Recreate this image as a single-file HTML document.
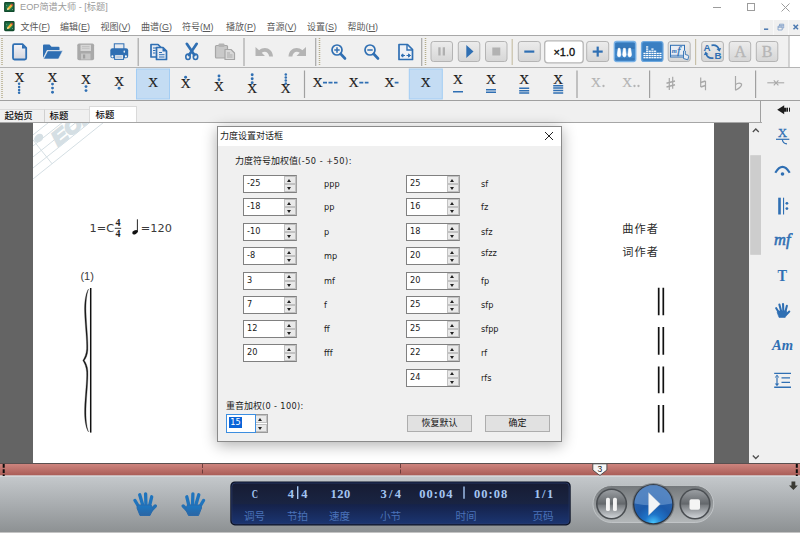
<!DOCTYPE html>
<html lang="zh">
<head>
<meta charset="utf-8">
<title>EOP简谱大师 - [标题]</title>
<style>
*{box-sizing:border-box;margin:0;padding:0}
html,body{width:800px;height:533px;overflow:hidden;background:#fff}
body{position:relative;font-family:"Liberation Sans","Noto Sans CJK SC",sans-serif;font-size:11px;color:#222}
.abs{position:absolute}
.t{position:absolute;white-space:nowrap;line-height:1}
#titlebar{left:0;top:0;width:800px;height:19px;background:#fff}
#menubar{left:0;top:19px;width:800px;height:16px;background:#fff}
.mi{position:absolute;top:22px;font-size:9px;line-height:11px;color:#585858;white-space:nowrap}
.mi u{text-decoration:underline;text-underline-offset:1px}
#tb1{left:0;top:35px;width:800px;height:33px;background:#f0f0f0;border-top:1px solid #a8a8a8;border-bottom:1px solid #b4b4b4}
#tb2{left:0;top:68px;width:800px;height:33px;background:#f0f0f0;border-bottom:1px solid #a0a0a0}
#tabbar{left:0;top:101px;width:800px;height:21px;background:#f0f0f0}
#main{left:0;top:122px;width:762px;height:341px;background:#646464}
#page{left:33px;top:122px;width:681px;height:341px;background:#fff;overflow:hidden}
#vscroll{left:749px;top:122px;width:13px;height:341px;background:#f0f0f0}
#rtool{left:762px;top:101px;width:38px;height:362px;background:#f0f0f0}
#timeline{left:0;top:463px;width:800px;height:12px;background:#c47872}
#bottom{left:0;top:475px;width:800px;height:58px;background:linear-gradient(#c9ccd0,#b4b8bc 50%,#a3a7ab)}
#dlg{left:217px;top:126px;width:345px;height:316px;background:#f0f0f0;border:1px solid #8a8a8a;box-shadow:0 3px 14px rgba(0,0,0,.32)}

#dlgtitle{left:218px;top:127px;width:343px;height:19px;background:#fff}
.spin{position:absolute;width:53.600px;height:18px;background:#fff;border:1px solid #808080;border-right-color:#a0a0a0}
.spin .v{position:absolute;left:3px;top:3px;font:8.2px/1 "DejaVu Sans","Liberation Sans",sans-serif;color:#1a1a1a;white-space:nowrap}
.spin i{position:absolute;right:0;width:12px;height:8px;background:#e9e9e9;border:1px solid #c2c2c2}
.spin i.up{top:0}
.spin i.dn{bottom:0}
.spin i::after{content:"";position:absolute;left:2.200px;top:1.500px;border-left:2.800px solid transparent;border-right:2.800px solid transparent}
.spin i.up::after{border-bottom:3px solid #222}
.spin i.dn::after{border-top:3px solid #222;top:2px}
.dl{font:8.2px/1 "DejaVu Sans","Liberation Sans",sans-serif;color:#1a1a1a}
.cj{font:9px/1 "Liberation Sans","Noto Sans CJK SC",sans-serif;color:#1a1a1a}
.btn{position:absolute;height:17px;width:65px;background:#e1e1e1;border:1px solid #adadad;text-align:center;font:9px/15px "Liberation Sans","Noto Sans CJK SC",sans-serif;color:#111}

.appico{position:absolute;width:10.700px;height:10.500px}
.tab{position:absolute;font:500 9.400px/1 "Liberation Sans","Noto Sans CJK SC",sans-serif;color:#111;white-space:nowrap}
</style>
</head>
<body>
<div id="titlebar" class="abs"></div>
<div id="menubar" class="abs"></div>
<svg class="appico" style="left:4.400px;top:1.500px" viewBox="0 0 22 22"><rect x="0" y="0" width="22" height="21.500" rx="3" fill="#0e4529"/><rect x="1.800" y="1.800" width="18.400" height="17.500" rx="2.500" fill="#196039"/><ellipse cx="11" cy="10.500" rx="7" ry="6" fill="#2a8552" opacity="0.700"/><path d="M5.800 17l1.900-5.200 6.500-7 3.700 3.400-6.500 7z" fill="#f2b233"/><path d="M14.200 4.800l3.700 3.400 1.600-1.700-3.700-3.400z" fill="#d8433f"/><path d="M5.800 17l1.900-5.200 3.500 3.300z" fill="#f7e2ae"/><circle cx="5" cy="6.500" r="0.900" fill="#d8efe0"/><circle cx="17.500" cy="15.500" r="0.900" fill="#d8efe0"/></svg>
<div class="t" style="left:20px;top:3px;font-size:9.2px;color:#9a9a9a">EOP简谱大师 - [标题]</div>
<svg class="abs" style="left:706px;top:0" width="94" height="19" viewBox="0 0 94 19"><g stroke="#9c9c9c" stroke-width="1" fill="none"><path d="M7 7.500H15"/><rect x="41.500" y="3.500" width="7" height="7"/><path d="M75.500 3.500l8 8M83.500 3.500l-8 8"/></g></svg>
<svg class="appico" style="left:4px;top:21.200px" viewBox="0 0 22 22"><rect x="0" y="0" width="22" height="21.500" rx="3" fill="#0e4529"/><rect x="1.800" y="1.800" width="18.400" height="17.500" rx="2.500" fill="#196039"/><ellipse cx="11" cy="10.500" rx="7" ry="6" fill="#2a8552" opacity="0.700"/><path d="M5.800 17l1.900-5.200 6.500-7 3.700 3.400-6.500 7z" fill="#f2b233"/><path d="M14.200 4.800l3.700 3.400 1.600-1.700-3.700-3.400z" fill="#d8433f"/><path d="M5.800 17l1.900-5.200 3.500 3.300z" fill="#f7e2ae"/><circle cx="5" cy="6.500" r="0.900" fill="#d8efe0"/><circle cx="17.500" cy="15.500" r="0.900" fill="#d8efe0"/></svg><div class="mi" style="left:20.5px">文件(<u>F</u>)</div><div class="mi" style="left:60px">编辑(<u>E</u>)</div><div class="mi" style="left:100.5px">视图(<u>V</u>)</div><div class="mi" style="left:141px">曲谱(<u>G</u>)</div><div class="mi" style="left:182px">符号(<u>M</u>)</div><div class="mi" style="left:226px">播放(<u>P</u>)</div><div class="mi" style="left:266.5px">音源(<u>V</u>)</div><div class="mi" style="left:307px">设置(<u>S</u>)</div><div class="mi" style="left:347.5px">帮助(<u>H</u>)</div>
<div class="abs" style="left:760px;top:20px;width:40px;height:15px;background:#f0f0f0"></div><div class="abs" style="left:773px;top:20px;width:1px;height:15px;background:#f8f8f8"></div><div class="abs" style="left:787.500px;top:20px;width:1px;height:15px;background:#f8f8f8"></div>
<svg class="abs" style="left:760px;top:20px" width="40" height="15" viewBox="0 0 40 15"><g stroke="#4a78b0" stroke-width="1.200" fill="none"><path d="M4 9.200H8.200" stroke-width="1.500"/><path d="M18 6.200h4.200v3.800h-4.200zM19.500 6v-1.800h4.200v3.800h-1.300M18 7.300h4.200M19.500 5.300h4.200" stroke-width="0.800" stroke="#7c9cc6"/><path d="M33.500 4.700l4.500 4.500M38 4.700l-4.500 4.500" stroke-width="1.500"/></g></svg>

<div id="tb1" class="abs"></div>
<div id="tb2" class="abs"></div>
<svg class="abs" style="left:0;top:36px" width="800" height="31" viewBox="0 36 800 31">
<defs>
<linearGradient id="gbtn" x1="0" y1="0" x2="0" y2="1"><stop offset="0" stop-color="#ececec"/><stop offset="1" stop-color="#d6d6d6"/></linearGradient>
<linearGradient id="gdoc" x1="0" y1="0" x2="0" y2="1"><stop offset="0" stop-color="#f4f4f8"/><stop offset="1" stop-color="#d4d6de"/></linearGradient>
</defs>
<rect x="789.500" y="36" width="11" height="31" fill="#fff"/>
<path d="M789 36V67" stroke="#b0b0b0" stroke-width="1"/>
<!-- grips -->
<g stroke="#b5ad8c" stroke-width="1.500" stroke-dasharray="1 1"><path d="M2 38V66"/><path d="M319.500 38V66"/><path d="M425.500 38V66"/></g>
<!-- separators -->
<g stroke="#a8a8a8" stroke-width="1.200"><path d="M138.200 38V66"/><path d="M244 38V66"/><path d="M315.700 38V66"/><path d="M421.700 38V66"/></g>
<g stroke="#c8c0a8" stroke-width="1.200"><path d="M512.200 39V65"/><path d="M695.600 39V65"/></g>
<!-- new -->
<path d="M14.500 44.200h8l3.700 3.700V58q0 1.500-1.500 1.500H14.500q-1.500 0-1.500-1.500V45.700q0-1.500 1.500-1.500z" fill="url(#gdoc)" stroke="#2f6fb3" stroke-width="1.800" stroke-linejoin="round"/>
<path d="M22 44.500v4h4z" fill="#2f6fb3"/>
<!-- open -->
<path d="M43 58V45.500q0-1 1-1h5.500l2 2.200h7q1 0 1 1V50H47z" fill="#2f6fb3"/>
<path d="M43.500 59l4.200-8.200h15l-4.200 8.200z" fill="#2f6fb3" stroke="#f0f0f0" stroke-width="0.600"/>
<!-- save (disabled) -->
<rect x="77.300" y="43.500" width="16.800" height="16.800" rx="1.800" fill="#a9a9a9"/>
<rect x="80.500" y="44.800" width="10.500" height="6.200" fill="#d6d6d6"/><path d="M82 46.500h7.500M82 48.300h7.500" stroke="#bdbdbd" stroke-width="0.800"/>
<rect x="81" y="53.500" width="9.500" height="6" fill="#c6c6c6"/>
<rect x="83" y="54.500" width="2.200" height="4" fill="#a0a0a0"/>
<!-- print -->
<rect x="114.300" y="43.800" width="9.600" height="6" fill="#e6eaf0" stroke="#2f6fb3" stroke-width="1"/>
<rect x="110.300" y="48.300" width="17.900" height="10" rx="2.200" fill="#2f6fb3"/>
<rect x="114.600" y="54.600" width="9" height="4.800" fill="#e4e8ee" stroke="#2f6fb3" stroke-width="1"/><path d="M116.300 57h5.600" stroke="#9fb4cf" stroke-width="1"/>
<circle cx="112.400" cy="56.400" r="1.050" fill="#fff"/><circle cx="125.900" cy="56.400" r="1.050" fill="#fff"/><ellipse cx="124.300" cy="51.700" rx="0.800" ry="1.100" fill="#e8eef6"/>
<!-- copy -->
<path d="M151 44.500h7l3 3V57H151z" fill="#e6ebf3" stroke="#2f6fb3" stroke-width="1.700" stroke-linejoin="round"/>
<path d="M156.500 47.500h6.500l3.500 3.500V59.500H156.500z" fill="#e6ebf3" stroke="#2f6fb3" stroke-width="1.700" stroke-linejoin="round"/>
<path d="M162.500 47.500v4h4z" fill="#2f6fb3"/>
<path d="M153 48h3M153 50.500h2.500M153 53h2.500M159 52.500h3M159 54.700h5.500M159 57h5.500" stroke="#2f6fb3" stroke-width="1"/>
<!-- cut -->
<g fill="none" stroke="#2f6fb3">
<path d="M186.800 43.800l7.600 11.300M196.700 43.800l-7.600 11.300" stroke-width="2.700" stroke-linecap="round"/>
<ellipse cx="188" cy="56.800" rx="2.200" ry="2.700" stroke-width="1.600"/><ellipse cx="195.500" cy="56.800" rx="2.200" ry="2.700" stroke-width="1.600"/>
</g>
<!-- paste disabled -->
<rect x="215.500" y="45.500" width="12" height="12.500" rx="1" fill="#c9c9c9" stroke="#a6a6a6" stroke-width="1.200"/>
<rect x="218.500" y="43.500" width="6" height="3.500" rx="1" fill="#b4b4b4"/>
<path d="M225 49.500h6l3.500 3.500v6.500H225z" fill="#d9d9d9" stroke="#a6a6a6" stroke-width="1.200" stroke-linejoin="round"/>
<path d="M227 53h3M227 55h5.500M227 57h5.500" stroke="#a6a6a6" stroke-width="0.900"/>
<!-- undo / redo disabled -->
<path d="M255.500 47v9h9.500l-3.300-3.200c2.800-2.300 6.800-1.300 7.500 3.800h3.800c-.6-8.500-8.800-10.700-13.900-6.300z" fill="#b4b4b4"/>
<path d="M306 47v9h-9.500l3.300-3.200c-2.800-2.300-6.800-1.300-7.500 3.800h-3.800c.6-8.500 8.800-10.700 13.900-6.300z" fill="#b4b4b4"/>
<!-- zoom in/out -->
<g fill="none" stroke="#2f6fb3">
<circle cx="337" cy="50" r="5" stroke-width="1.700"/><path d="M340.800 54l4.200 4.500" stroke-width="2.600" stroke-linecap="round"/><path d="M334.300 50h5.400M337 47.300v5.400" stroke-width="1.500"/>
<circle cx="370" cy="50" r="5" stroke-width="1.700"/><path d="M373.800 54l4.200 4.500" stroke-width="2.600" stroke-linecap="round"/><path d="M367.300 50h5.400" stroke-width="1.500"/>
</g>
<!-- fit -->
<path d="M399 44.500h8.500l5 5V59.500H399z" fill="#eef1f6" stroke="#2f6fb3" stroke-width="1.700" stroke-linejoin="round"/>
<path d="M407 44.500v5.500h5.500" fill="none" stroke="#2f6fb3" stroke-width="1.400"/>
<path d="M401 55.500h9.500M401 55.500l2-1.600v3.200zM410.500 55.500l-2-1.600v3.200z" stroke="#2f6fb3" stroke-width="1" fill="#2f6fb3" stroke-dasharray="none"/>
<rect x="405" y="54" width="1.500" height="3" fill="#eef1f6"/>
<!-- transport buttons -->
<g fill="url(#gbtn)" stroke="#b4b4b4" stroke-width="1">
<rect x="431" y="41.500" width="21.500" height="20" rx="2.500"/>
<rect x="458.300" y="41.500" width="21.500" height="20" rx="2.500"/>
<rect x="485.500" y="41.500" width="21.500" height="20" rx="2.500"/>
<rect x="518.300" y="41.500" width="22" height="20" rx="2.500"/>
<rect x="586.700" y="41.500" width="22" height="20" rx="2.500"/>
<rect x="668.200" y="41.500" width="22" height="20" rx="2.500"/>
<rect x="701.700" y="41.500" width="21.700" height="20" rx="2.500"/>
<rect x="729.200" y="41.500" width="21.500" height="20" rx="2.500"/>
<rect x="756.300" y="41.500" width="21.500" height="20" rx="2.500"/>
</g>
<rect x="438.300" y="47.300" width="2.300" height="8.200" fill="#b0b0b0"/><rect x="442.700" y="47.300" width="2.300" height="8.200" fill="#b0b0b0"/>
<path d="M466.300 45l7.200 6.500-7.200 6.500z" fill="#2f6fb3"/>
<rect x="492.300" y="47.500" width="8" height="8" fill="#b2b2b2"/>
<rect x="524.300" y="50.500" width="10" height="2.200" fill="#2f6fb3"/>
<rect x="592.700" y="50.500" width="10" height="2.200" fill="#2f6fb3"/><rect x="596.600" y="46.600" width="2.200" height="10" fill="#2f6fb3"/>
<!-- speed box -->
<rect x="544.700" y="40.800" width="38.500" height="22" rx="3" fill="#fff" stroke="#b6b6b6" stroke-width="1.300"/>
<text x="564.300" y="56.300" text-anchor="middle" font-family="Liberation Sans, sans-serif" font-size="11" fill="#111" stroke="#111" stroke-width="0.350">×1.0</text>
<!-- piano -->
<rect x="614.300" y="41.500" width="21.500" height="20" rx="2.500" fill="#3f86c9" stroke="#7ab2e6" stroke-width="1.300"/>
<rect x="615.500" y="43" width="19" height="5" fill="#3679bb"/>
<path d="M615.500 48.200h19" stroke="#2a66a6" stroke-width="0.800"/>
<rect x="615.500" y="58" width="19" height="2.500" fill="#3679bb"/>
<g fill="#fff" stroke="#fff" stroke-width="0.600"><path d="M618.2 48.300h1.800l0.900 6.300q0 2.300-1.800 2.300t-1.800-2.300z"/><path d="M623.5 48.300h1.800l0.900 6.300q0 2.300-1.800 2.300t-1.800-2.300z"/><path d="M628.8000000000001 48.300h1.800l0.900 6.300q0 2.300-1.800 2.300t-1.800-2.300z"/></g>
<!-- eq -->
<rect x="641.500" y="41.500" width="21.500" height="20" rx="2.500" fill="#3f86c9" stroke="#6fa8de" stroke-width="1.200"/>
<rect x="643" y="43" width="18.500" height="17" fill="#3a7fc2"/>
<g fill="#fff"><rect x="643.40" y="57.05" width="2.200" height="1.300"/><rect x="643.40" y="54.90" width="2.200" height="1.300"/><rect x="643.40" y="52.75" width="2.200" height="1.300"/><rect x="646.05" y="57.05" width="2.200" height="1.300"/><rect x="646.05" y="54.90" width="2.200" height="1.300"/><rect x="646.05" y="52.75" width="2.200" height="1.300"/><rect x="646.05" y="50.60" width="2.200" height="1.300"/><rect x="646.05" y="48.45" width="2.200" height="1.300"/><rect x="646.05" y="46.30" width="2.200" height="1.300"/><rect x="648.70" y="57.05" width="2.200" height="1.300"/><rect x="648.70" y="54.90" width="2.200" height="1.300"/><rect x="648.70" y="52.75" width="2.200" height="1.300"/><rect x="648.70" y="50.60" width="2.200" height="1.300"/><rect x="651.35" y="57.05" width="2.200" height="1.300"/><rect x="651.35" y="54.90" width="2.200" height="1.300"/><rect x="651.35" y="52.75" width="2.200" height="1.300"/><rect x="651.35" y="50.60" width="2.200" height="1.300"/><rect x="651.35" y="48.45" width="2.200" height="1.300"/><rect x="654.00" y="57.05" width="2.200" height="1.300"/><rect x="654.00" y="54.90" width="2.200" height="1.300"/><rect x="654.00" y="52.75" width="2.200" height="1.300"/><rect x="654.00" y="50.60" width="2.200" height="1.300"/><rect x="656.65" y="57.05" width="2.200" height="1.300"/><rect x="656.65" y="54.90" width="2.200" height="1.300"/><rect x="656.65" y="52.75" width="2.200" height="1.300"/><rect x="659.30" y="57.05" width="2.200" height="1.300"/><rect x="659.30" y="54.90" width="2.200" height="1.300"/><rect x="659.30" y="52.75" width="2.200" height="1.300"/></g>
<!-- mf -->
<rect x="670.500" y="45.300" width="14" height="11.700" fill="#e8edf5" stroke="#2f6fb3" stroke-width="1"/>
<path d="M671 55.300h13" stroke="#2f6fb3" stroke-width="0.700"/>
<text x="671.800" y="53.300" font-family="Liberation Serif, serif" font-style="italic" font-weight="bold" font-size="6.500" fill="#2f6fb3">m</text><text x="677.300" y="54.300" font-family="Liberation Serif, serif" font-style="italic" font-size="11" fill="#2f6fb3" stroke="#2f6fb3" stroke-width="0.300">f</text>
<path d="M683.500 58.500v-7.500q.9-1.300 1.800 0v3.500l2.800.8q.8.400.5 1.500l-.8 3z" fill="#e8edf5" stroke="#2f6fb3" stroke-width="0.900"/>
<!-- AB -->
<g font-family="Liberation Sans, sans-serif" font-weight="bold" font-size="9.800" fill="#2f6fb3"><text x="703.600" y="50.600">A</text><text x="714.500" y="59.200">B</text></g>
<g fill="none" stroke="#2f6fb3" stroke-width="1.700"><path d="M711.500 45.300q5.800-1 7.500 4.200"/><path d="M713.500 58q-5.800 1-7.500-4.200"/></g>
<path d="M716.500 49l3 2.800 1.700-3.800z" fill="#2f6fb3"/><path d="M708.500 54.300l-3-2.800-1.700 3.800z" fill="#2f6fb3"/>
<!-- A B disabled -->
<g font-family="Liberation Serif, serif" font-size="16" fill="#b6b6b6" stroke="#b6b6b6" stroke-width="0.350" text-anchor="middle"><text x="740.300" y="57">A</text><text x="767.200" y="57">B</text></g>
</svg>
<svg class="abs" style="left:0;top:68px" width="800" height="32" viewBox="0 68 800 32">
<path d="M2 71V98" stroke="#b5ad8c" stroke-width="1.500" stroke-dasharray="1 1"/>
<rect x="136.500" y="69" width="33" height="30" fill="#c4dcf3" stroke="#a3cdf4" stroke-width="1"/>
<rect x="409.300" y="69" width="33" height="30" fill="#c4dcf3" stroke="#a3cdf4" stroke-width="1"/>
<path d="M304.5 70.500V98" stroke="#a0a0a0" stroke-width="1.200"/>
<path d="M577 70.500V98" stroke="#a0a0a0" stroke-width="1.200"/>
<path d="M649.6 70.500V98" stroke="#a0a0a0" stroke-width="1.200"/>
<path d="M755.6 70.500V98" stroke="#a0a0a0" stroke-width="1.200"/>
<g font-family="Liberation Serif, serif" font-size="13.600" stroke="#1c1c1c" stroke-width="0.200" text-rendering="geometricPrecision">
<text x="19.3" y="82" text-anchor="middle" fill="#1c1c1c">X</text>
<text x="52.5" y="82" text-anchor="middle" fill="#1c1c1c">X</text>
<text x="85.8" y="84.4" text-anchor="middle" fill="#1c1c1c">X</text>
<text x="119.2" y="85.9" text-anchor="middle" fill="#1c1c1c">X</text>
<text x="153.2" y="87.4" text-anchor="middle" fill="#1c1c1c">X</text>
<text x="185.7" y="88.4" text-anchor="middle" fill="#1c1c1c">X</text>
<text x="219" y="91" text-anchor="middle" fill="#1c1c1c">X</text>
<text x="252.2" y="93.2" text-anchor="middle" fill="#1c1c1c">X</text>
<text x="285.6" y="93.2" text-anchor="middle" fill="#1c1c1c">X</text>
<text x="317.7" y="87.2" text-anchor="middle" fill="#1c1c1c">X</text>
<text x="353.7" y="87.2" text-anchor="middle" fill="#1c1c1c">X</text>
<text x="389.5" y="87.2" text-anchor="middle" fill="#1c1c1c">X</text>
<text x="425.6" y="87.3" text-anchor="middle" fill="#1c1c1c">X</text>
<text x="458" y="83.5" text-anchor="middle" fill="#1c1c1c">X</text>
<text x="491" y="83.5" text-anchor="middle" fill="#1c1c1c">X</text>
<text x="524.2" y="83.5" text-anchor="middle" fill="#1c1c1c">X</text>
<text x="558.2" y="83.5" text-anchor="middle" fill="#1c1c1c">X</text>
<text x="595.8" y="87" text-anchor="middle" fill="#b4b4b4" stroke="#b4b4b4">X</text>
<text x="627.2" y="87" text-anchor="middle" fill="#b4b4b4" stroke="#b4b4b4">X</text>
</g>
<g fill="#2f6fb3"><circle cx="19.1" cy="83.7" r="1.25"/><circle cx="19.1" cy="86.9" r="1.25"/><circle cx="19.1" cy="90" r="1.25"/><circle cx="19.1" cy="92.8" r="1.25"/><circle cx="52.5" cy="84.1" r="1.45"/><circle cx="52.5" cy="88.1" r="1.45"/><circle cx="52.5" cy="92.2" r="1.45"/><circle cx="86" cy="86.6" r="1.45"/><circle cx="86" cy="90.6" r="1.45"/><circle cx="119.1" cy="88.2" r="1.45"/><circle cx="185.6" cy="77.2" r="1.45"/><circle cx="219" cy="76" r="1.45"/><circle cx="219" cy="79.8" r="1.45"/><circle cx="252.2" cy="74.8" r="1.45"/><circle cx="252.2" cy="78.7" r="1.45"/><circle cx="252.2" cy="82.7" r="1.45"/><circle cx="285.8" cy="74.5" r="1.25"/><circle cx="285.8" cy="77.5" r="1.25"/><circle cx="285.8" cy="80.5" r="1.25"/><circle cx="285.8" cy="83.5" r="1.25"/></g>
<path d="M323 82.700H327 M328.5 82.700H332.5 M334 82.700H337.5 M359.3 82.700H363.3 M364.8 82.700H368.5 M394.7 82.700H398.5" stroke="#2f6fb3" stroke-width="1.800"/>
<path d="M453 91.700H463 M486 89.8H496 M486 92.2H496 M519.200 88.3H529.200 M519.200 90.7H529.200 M519.200 93H529.200 M553.200 85.7H563.200 M553.200 88.1H563.200 M553.200 90.5H563.200 M553.200 92.9H563.200" stroke="#2f6fb3" stroke-width="1.500"/>
<g fill="#b4b4b4"><circle cx="603.500" cy="86" r="1.150"/><circle cx="634.500" cy="86" r="1.150"/><circle cx="638.500" cy="86" r="1.150"/></g>
<g stroke="#a8a8a8" fill="none" stroke-width="1.200"><path d="M669.300 78V90M672.700 76.700V88.700"/><path d="M666.500 83.200l8.500-2.200M666.500 87l8.500-2.200" stroke-width="1.500"/><path d="M700.700 77.500V87M705.500 81V90.300"/><path d="M700.700 82.500l4.800-1.500M700.700 87l4.800-1.500" stroke-width="1.500"/><path d="M735.500 76V90.300"/><path d="M735.500 84.500q3.500-2.500 6-.5q1 2.500-6 6.300" stroke-width="1.300"/><path d="M767.300 82.800H784.200" stroke-width="1.100"/><path d="M773.800 80.300l4.600 5M778.400 80.300l-4.600 5" stroke-width="1.100"/></g>
</svg>

<div id="tabbar" class="abs"></div>
<div class="abs" style="left:0;top:101px;width:761px;height:21.500px;border-right:1px solid #a0a0a0;border-bottom:1px solid #a0a0a0"></div>
<div class="abs" style="left:0;top:108.500px;width:45px;height:14px;border-right:1px solid #d0d0d0;border-top:1px solid #dcdcdc"></div>
<div class="abs" style="left:45px;top:108.500px;width:45px;height:14px;border-top:1px solid #dcdcdc"></div>
<div class="abs" style="left:89.200px;top:105.500px;width:48px;height:17px;background:#fff;border:1px solid #dadada;border-bottom:none"></div>
<div class="tab" style="left:4.500px;top:111.300px">起始页</div>
<div class="tab" style="left:49.500px;top:111.300px">标题</div>
<div class="tab" style="left:95.500px;top:109.600px">标题</div>
<div id="main" class="abs"></div>
<div id="page" class="abs"></div>

<svg class="abs" style="left:33px;top:122px" width="681" height="341" viewBox="33 122 681 341">
<!-- watermark -->
<g transform="translate(33 179) rotate(-38.700)" fill="#d5dfe4" stroke="none">
<g stroke="#d3dde2" stroke-width="0.900" fill="none"><path d="M-5 0H120M-5 -8.600H120M-5 -17.200H120M-5 -25.800H120M-5 -34.400H120"/><path d="M24.400 0V-40"/></g>
<ellipse cx="30" cy="-28.300" rx="5" ry="3.800" />
<text transform="translate(39.800 -9.600) scale(1.140 1)" font-family="Liberation Sans, sans-serif" font-weight="bold" font-style="italic" font-size="20" stroke="#d5dfe4" stroke-width="1.700">EOP</text>
</g>
<!-- key / tempo -->
<g font-family="DejaVu Sans, Liberation Sans, sans-serif" fill="#3a3a3a">
<text x="89.600" y="231.700" font-size="11.300">1=C</text>
<text x="140.800" y="231.700" font-size="11.300">=120</text>
<text x="80.400" y="280" font-size="11" font-family="Liberation Sans, sans-serif">(1)</text>
</g>
<g font-family="Liberation Serif, serif" font-weight="bold" font-size="10" fill="#222" text-anchor="middle"><text x="118" y="226.400">4</text><text x="118" y="236.800">4</text></g>
<path d="M114.800 228.300H121.200" stroke="#222" stroke-width="0.900"/>
<ellipse cx="135" cy="232.300" rx="2.900" ry="1.900" transform="rotate(-25 135 232.300)" fill="#111"/>
<path d="M137.400 219.300V232" stroke="#111" stroke-width="0.900"/>
<!-- brace and bar -->
<path d="M90.700 288V432.600" stroke="#111" stroke-width="1.500"/>
<path d="M88.600 289C85.500 293 84.300 303 84.600 312C85 325 87 340 86.600 349C86.300 354 84.500 358 82.800 360.500C84.500 363 86.300 367 86.600 372C87 381 85 396 84.600 409C84.300 418 85.500 428 88.600 432C86.500 427 85.800 418 86 409C86.400 396 88.300 381 87.900 371C87.600 366 85.800 362.500 84.300 360.500C85.800 358.500 87.600 355 87.900 350C88.300 340 86.400 325 86 312C85.800 303 86.500 294 88.600 289Z" fill="#1a1a1a" stroke="#1a1a1a" stroke-width="0.300"/>
<!-- authors -->
<g font-family="Liberation Sans, Noto Sans CJK SC, sans-serif" font-size="11.200" fill="#2a2a2a" letter-spacing="1"><text x="622.300" y="233">曲作者</text><text x="622.300" y="255.600">词作者</text></g>
<!-- double bars -->
<path d="M658.700 287.700V315.300M663.300 287.700V315.300M658.700 327.100V354.700M663.300 327.100V354.700M658.700 366.500V393.200M663.300 366.500V393.200M658.700 405V432.400M663.300 405V432.400" stroke="#111" stroke-width="1.700"/>
</svg>

<div id="vscroll" class="abs"></div>
<div id="rtool" class="abs"></div>
<div class="abs" style="left:0;top:121.500px;width:761.500px;height:1px;background:#a6a6a6"></div>
<svg class="abs" style="left:749px;top:101px" width="51" height="362" viewBox="749 101 51 362">
<!-- scrollbar -->
<rect x="750.200" y="155.200" width="10.800" height="99.600" fill="#cdcdcd"/>
<path d="M752.800 132l3-3 3 3M752.800 455.500l3 3 3-3" fill="none" stroke="#505050" stroke-width="1.300"/>
<!-- back arrow -->
<path d="M777.200 109.700l7-4.500v2.500h2.500v4h-2.500v2.500z" fill="#1e1e1e"/>
<path d="M787.500 107.700v4M789.500 107.700v4" stroke="#1e1e1e" stroke-width="1"/>
<g fill="#2f6fb3" stroke="none">
<text x="782.600" y="136.700" text-anchor="middle" font-family="Liberation Serif, serif" font-size="12.500" stroke="#2f6fb3" stroke-width="0.300">X</text>
<path d="M776 138.700H789.300V139.900H776z"/>
<circle cx="782.500" cy="174" r="1.800"/>
<rect x="778.200" y="197.700" width="2.600" height="16.800"/>
<rect x="783" y="197.700" width="1.100" height="16.800"/>
<circle cx="786.900" cy="203.300" r="1.400"/><circle cx="786.900" cy="208.600" r="1.400"/>
<text x="782.300" y="245.300" text-anchor="middle" font-family="Liberation Serif, serif" font-style="italic" font-size="16.500" stroke="#2f6fb3" stroke-width="0.550">mf</text>
<text x="782.200" y="280.800" text-anchor="middle" font-family="Liberation Serif, serif" font-weight="bold" font-size="16.500" textLength="9.600" lengthAdjust="spacingAndGlyphs">T</text>
<text x="782.500" y="349.700" text-anchor="middle" font-family="Liberation Serif, serif" font-style="italic" font-weight="bold" font-size="14.600">Am</text>
<path d="M774.200 372.700H791V374H774.200zM774.200 386.600H791V387.900H774.200zM781.500 377.200H790V378.500H781.500zM781.500 381.700H790V383H781.500z"/>
<path d="M776.400 376.500V384.500H777.600V376.500zM777 374.600l2.200 2.800h-4.400zM777 386.200l2.200-2.800h-4.400z"/>
</g>
<g fill="none" stroke="#2f6fb3">
<path d="M782.300 139.500q.5 4 4.700 4.300" stroke-width="1.200"/>
<path d="M775.300 172.800q7.200-11.800 14.400 0" stroke-width="2.200"/>
</g>
<!-- hand -->
<g transform="translate(774.800 303) scale(0.610)">
<g stroke="#2f6fb3" stroke-width="3.400" stroke-linecap="round" fill="none"><path d="M2.300 8.500L7 16M7.500 2.500L10.500 14M13.500 1.600L14 14M19.800 4.700L17.500 14M23.700 14L18.500 19.300"/></g>
<path d="M4.500 13H18.500L20.500 17L17 23.700H7L4 16Z" fill="#2f6fb3" stroke="#2f6fb3" stroke-width="1" stroke-linejoin="round"/>
</g>
</svg>

<div id="timeline" class="abs"></div>
<div id="bottom" class="abs"></div>
<svg class="abs" style="left:0;top:463px" width="800" height="70" viewBox="0 463 800 70">
<defs>
<linearGradient id="gred" x1="0" y1="0" x2="0" y2="1"><stop offset="0" stop-color="#d18882"/><stop offset="1" stop-color="#a75a54"/></linearGradient>
<linearGradient id="ggray" x1="0" y1="0" x2="0" y2="1"><stop offset="0" stop-color="#c5c9cc"/><stop offset="0.500" stop-color="#a9adb0"/><stop offset="1" stop-color="#8c9092"/></linearGradient>
<linearGradient id="glcd" x1="0" y1="0" x2="0" y2="1"><stop offset="0" stop-color="#171c33"/><stop offset="0.500" stop-color="#192442"/><stop offset="0.530" stop-color="#15224a"/><stop offset="1" stop-color="#1b3571"/></linearGradient>
<linearGradient id="gpill" x1="0" y1="0" x2="0" y2="1"><stop offset="0" stop-color="#74787b"/><stop offset="1" stop-color="#b4b8ba"/></linearGradient>
<linearGradient id="gknob" x1="0" y1="0" x2="0" y2="1"><stop offset="0" stop-color="#9a9ea2"/><stop offset="0.500" stop-color="#63676b"/><stop offset="0.550" stop-color="#7a7e82"/><stop offset="1" stop-color="#d0d4d8"/></linearGradient>
<radialGradient id="gplay" cx="0.500" cy="1" r="0.800"><stop offset="0" stop-color="#48c8ff"/><stop offset="0.300" stop-color="#1f74c8"/><stop offset="0.600" stop-color="#1c5aaa"/><stop offset="1" stop-color="#2a62ac"/></radialGradient>
<linearGradient id="ghand" x1="0" y1="0" x2="0" y2="1"><stop offset="0" stop-color="#1b78c4"/><stop offset="1" stop-color="#2c66a3"/></linearGradient>
</defs>
<rect x="0" y="463" width="800" height="13" fill="url(#gred)"/>
<path d="M0 463.500H800" stroke="#5a5050" stroke-width="1"/>
<rect x="0" y="475.600" width="800" height="57.400" fill="url(#ggray)"/>
<path d="M0 476H800" stroke="#e2e5e7" stroke-width="1"/>
<path d="M0 532.500H800" stroke="#c4c4c4" stroke-width="1"/>
<!-- ticks -->
<path d="M3.700 464V476M796.800 464V476" stroke="#0c0c0c" stroke-width="2" stroke-dasharray="3.800 1.400"/>
<path d="M202.500 464V475M400.500 464V475" stroke="#5a3030" stroke-width="0.800" stroke-dasharray="4 1.500"/>
<!-- marker -->
<path d="M592.800 463.800H606.900V470L600.500 475H599.200L592.800 470Z" fill="#f6f6f6" stroke="#444" stroke-width="0.900" stroke-linejoin="round"/>
<text x="599.900" y="472" text-anchor="middle" font-family="Liberation Sans, sans-serif" font-size="8.500" fill="#222">3</text>
<!-- hands -->
<g id="handL">
<g stroke="url(#ghand)" stroke-width="3.300" stroke-linecap="round" fill="none"><path d="M135 500.500L139.500 508" stroke="#1f74bd"/><path d="M139.700 494.800L143 506" stroke="#1f74bd"/><path d="M145.600 493.800L146 506" stroke="#1f74bd"/><path d="M151.700 496.800L149.500 506" stroke="#1f74bd"/><path d="M155.300 506L150.500 511" stroke="#2370b4"/></g>
<path d="M137.500 505H151L153 509L150 515.500H140L137 508Z" fill="url(#ghand)" stroke="#2a6aaa" stroke-width="1" stroke-linejoin="round"/>
</g>
<use href="#handL" transform="translate(338.500 0) scale(-1 1)"/>
<!-- lcd -->
<rect x="230.300" y="481.500" width="340.400" height="43.900" rx="4.500" fill="#0b1226"/>
<rect x="231.800" y="483" width="337.400" height="40.900" rx="3.500" fill="url(#glcd)" stroke="#2c3c6c" stroke-width="0.800"/>
<g font-family="Liberation Serif, serif" font-weight="bold" font-size="12.500" fill="#a4c6f2" letter-spacing="0.500">
<text x="251.700" y="497.500" textLength="6.600" lengthAdjust="spacingAndGlyphs">C</text>
<text x="287.800" y="497.500">4</text><text x="301.300" y="497.500">4</text>
<text x="330.500" y="497.500" textLength="20.200" lengthAdjust="spacing">120</text>
<text x="380.600" y="497.500" textLength="21" lengthAdjust="spacing">3/4</text>
<text x="419.300" y="497.500" textLength="33.800" lengthAdjust="spacing">00:04</text>
<text x="474" y="497.500" textLength="33.800" lengthAdjust="spacing">00:08</text>
<text x="534.300" y="497.500" textLength="19.500" lengthAdjust="spacing">1/1</text>
</g>
<path d="M297.700 486.200V499M464 486.600V498.800" stroke="#a4c6f2" stroke-width="1.400"/>
<g font-family="Liberation Sans, Noto Sans CJK SC, sans-serif" font-size="10.600" fill="#4a72b8">
<text x="244" y="519.500">调号</text><text x="287" y="519.500">节拍</text><text x="329" y="519.500">速度</text><text x="380" y="519.500">小节</text><text x="455.500" y="519.500">时间</text><text x="532.500" y="519.500">页码</text>
</g>
<!-- transport -->
<rect x="593" y="485.500" width="120.700" height="37" rx="18.500" fill="url(#gpill)" stroke="#c8ccce" stroke-width="0.800"/>
<circle cx="611.600" cy="504" r="15.600" fill="#4a4e52"/>
<circle cx="611.600" cy="504" r="14" fill="url(#gknob)"/>
<circle cx="695" cy="504" r="15.600" fill="#4a4e52"/>
<circle cx="695" cy="504" r="14" fill="url(#gknob)"/>
<rect x="606" y="497.800" width="3.900" height="13.100" rx="1.500" fill="#f4f4f4"/><rect x="613" y="497.800" width="3.900" height="13.100" rx="1.500" fill="#f4f4f4"/>
<rect x="689.500" y="499.200" width="10.500" height="10.500" rx="1.800" fill="#f4f4f4"/>
<circle cx="653.300" cy="504.300" r="21.300" fill="#5a5e62" opacity="0.550"/><circle cx="653.300" cy="504.300" r="20.200" fill="#2c3440"/>
<circle cx="653.300" cy="504.300" r="19" fill="url(#gplay)"/><path d="M634.500 503.500A18.800 18.800 0 0 1 672.100 503.500Q653.300 507.500 634.500 503.500Z" fill="#8fb4e0" opacity="0.420"/>
<path d="M648.600 492.700L660.300 504L648.600 515.300Z" fill="#f2f4f6" stroke="#c0c8d0" stroke-width="0.500"/>
<!-- down arrow -->
<path d="M791.500 481.500h3.800v4h2.500l-4.400 4.500-4.400-4.500h2.500z" fill="#3a3a34"/>
</svg>

<div id="dlg" class="abs"></div>
<div id="dlgtitle" class="abs"></div>
<div class="t cj" style="left:220px;top:132px">力度设置对话框</div>
<svg class="abs" style="left:544px;top:131px" width="10" height="10" viewBox="0 0 10 10"><path d="M1 1L9 9M9 1L1 9" stroke="#222" stroke-width="1" fill="none"/></svg>
<div class="t cj" style="left:235px;top:157px">力度符号加权值<span class="dl" style="position:static;letter-spacing:.5px">(-50 - +50):</span></div>
<div class="spin" style="left:243px;top:175px"><span class="v">-25</span><i class="up"></i><i class="dn"></i></div><div class="t dl" style="left:324px;top:180px">ppp</div>
<div class="spin" style="left:243px;top:198px"><span class="v">-18</span><i class="up"></i><i class="dn"></i></div><div class="t dl" style="left:324px;top:203px">pp</div>
<div class="spin" style="left:243px;top:223px"><span class="v">-10</span><i class="up"></i><i class="dn"></i></div><div class="t dl" style="left:324px;top:228px">p</div>
<div class="spin" style="left:243px;top:247px"><span class="v">-8</span><i class="up"></i><i class="dn"></i></div><div class="t dl" style="left:324px;top:252px">mp</div>
<div class="spin" style="left:243px;top:271.5px"><span class="v">3</span><i class="up"></i><i class="dn"></i></div><div class="t dl" style="left:324px;top:276.5px">mf</div>
<div class="spin" style="left:243px;top:296px"><span class="v">7</span><i class="up"></i><i class="dn"></i></div><div class="t dl" style="left:324px;top:301px">f</div>
<div class="spin" style="left:243px;top:320px"><span class="v">12</span><i class="up"></i><i class="dn"></i></div><div class="t dl" style="left:324px;top:325px">ff</div>
<div class="spin" style="left:243px;top:344px"><span class="v">20</span><i class="up"></i><i class="dn"></i></div><div class="t dl" style="left:324px;top:349px">fff</div>
<div class="spin" style="left:406px;top:175px"><span class="v">25</span><i class="up"></i><i class="dn"></i></div><div class="t dl" style="left:481px;top:180px">sf</div>
<div class="spin" style="left:406px;top:198px"><span class="v">16</span><i class="up"></i><i class="dn"></i></div><div class="t dl" style="left:481px;top:203px">fz</div>
<div class="spin" style="left:406px;top:223px"><span class="v">18</span><i class="up"></i><i class="dn"></i></div><div class="t dl" style="left:481px;top:228px">sfz</div>
<div class="spin" style="left:406px;top:247px"><span class="v">20</span><i class="up"></i><i class="dn"></i></div><div class="t dl" style="left:481px;top:249px">sfzz</div>
<div class="spin" style="left:406px;top:271.5px"><span class="v">20</span><i class="up"></i><i class="dn"></i></div><div class="t dl" style="left:481px;top:276.5px">fp</div>
<div class="spin" style="left:406px;top:296px"><span class="v">25</span><i class="up"></i><i class="dn"></i></div><div class="t dl" style="left:481px;top:301px">sfp</div>
<div class="spin" style="left:406px;top:320px"><span class="v">25</span><i class="up"></i><i class="dn"></i></div><div class="t dl" style="left:481px;top:325px">sfpp</div>
<div class="spin" style="left:406px;top:344px"><span class="v">22</span><i class="up"></i><i class="dn"></i></div><div class="t dl" style="left:481px;top:349px">rf</div>
<div class="spin" style="left:406px;top:368.5px"><span class="v">24</span><i class="up"></i><i class="dn"></i></div><div class="t dl" style="left:481px;top:373.5px">rfs</div>

<div class="t cj" style="left:226px;top:401.700px">重音加权<span class="dl" style="position:static;letter-spacing:.35px">(0 - 100):</span></div>
<div class="spin" style="left:226.300px;top:414.300px;width:42px;height:18.400px;border-color:#9a9a9a"><span class="v" style="left:2px;top:2px;background:#0a64d8;color:#fff;padding:1px 1px 1px 1px">15</span><i class="up"></i><i class="dn"></i></div><div class="abs" style="left:226.300px;top:414.300px;width:29.700px;height:18.400px;border:1px solid #3c8ee0"></div>
<div class="btn" style="left:407px;top:415px">恢复默认</div>
<div class="btn" style="left:485px;top:415px">确定</div>

</body>
</html>
